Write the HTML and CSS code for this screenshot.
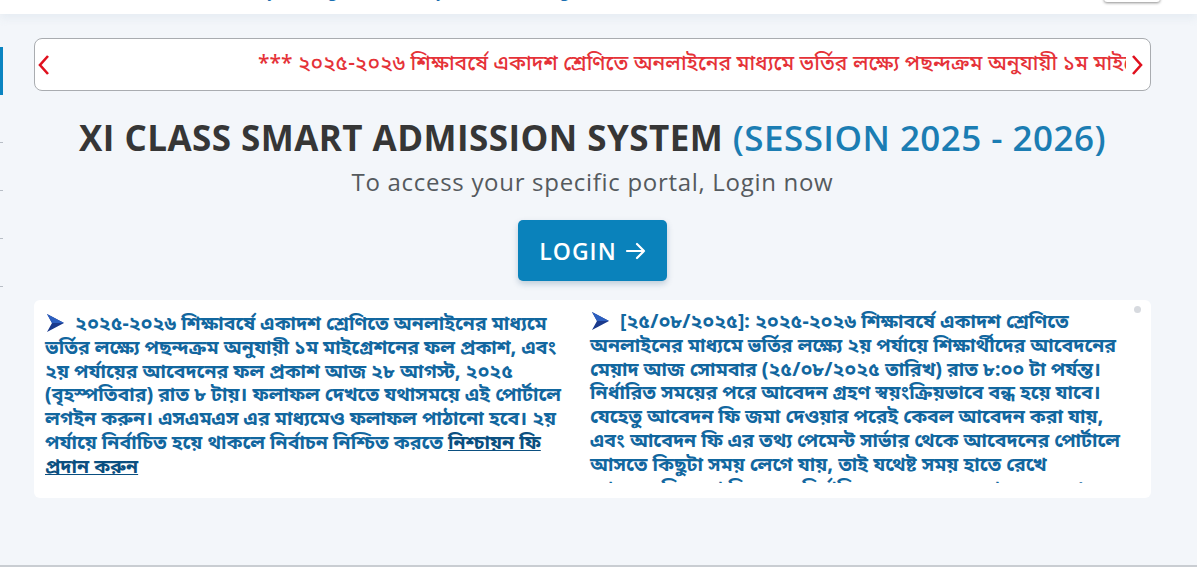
FILE: index.html
```html
<!DOCTYPE html>
<html lang="bn">
<head>
<meta charset="utf-8">
<title>XI Class Smart Admission System</title>
<link rel="stylesheet" href="styles.css">
</head>
<body>
<header class="topbar">
  <div class="topbar-text">Directorate of Secondary and Higher Secondary Education, Bangladesh — Inter Education Board</div>
  <div class="topbar-btn"></div>
</header>
<div class="page">
  <aside class="sidebar">
    <div class="side-active"></div>
    <div class="side-item"></div>
    <div class="side-item"></div>
    <div class="side-item"></div>
    <div class="side-item"></div>
  </aside>
  <main class="main">
    <div class="marquee">
      <span class="chev">
        <svg width="14" height="24" viewBox="0 0 14 24"><path d="M11 3 L3 12 L11 21" fill="none" stroke="#e0101e" stroke-width="2.6"/></svg>
      </span>
      <div class="marquee-track">
        <span class="marquee-text">*** ২০২৫-২০২৬ শিক্ষাবর্ষে একাদশ শ্রেণিতে অনলাইনের মাধ্যমে ভর্তির লক্ষ্যে পছন্দক্রম অনুযায়ী ১ম মাইগ্রেশনের ফল প্রকাশ, এবং ২য় পর্যায়ের আবেদনের ফল প্রকাশ আজ ২৮ আগস্ট, ২০২৫</span>
      </div>
      <span class="chev">
        <svg width="14" height="24" viewBox="0 0 14 24"><path d="M3 3 L11 12 L3 21" fill="none" stroke="#e0101e" stroke-width="2.6"/></svg>
      </span>
    </div>

    <section class="hero">
      <h1 class="title">XI CLASS SMART ADMISSION SYSTEM <span class="session">(SESSION 2025 - 2026)</span></h1>
      <p class="subtitle">To access your specific portal, Login now</p>
      <a class="login-btn" href="#">LOGIN
        <svg width="22" height="20" viewBox="0 0 22 20"><path d="M2 10 H19 M12 3 L19 10 L12 17" fill="none" stroke="#fff" stroke-width="2.2" stroke-linecap="round" stroke-linejoin="round"/></svg>
      </a>
    </section>

    <section class="notices">
      <div class="notice">
        <p><svg class="bullet" width="20" height="20" viewBox="0 0 20 20"><path d="M2 1 L19 10 L2 19 L7 10 Z" fill="#1a3a8c"/><path d="M2 1 L19 10 L7 10 Z" fill="#2c5fc0"/></svg>২০২৫-২০২৬ শিক্ষাবর্ষে একাদশ শ্রেণিতে অনলাইনের মাধ্যমে ভর্তির লক্ষ্যে পছন্দক্রম অনুযায়ী ১ম মাইগ্রেশনের ফল প্রকাশ, এবং ২য় পর্যায়ের আবেদনের ফল প্রকাশ আজ ২৮ আগস্ট, ২০২৫ (বৃহস্পতিবার) রাত ৮ টায়। ফলাফল দেখতে যথাসময়ে এই পোর্টালে লগইন করুন। এসএমএস এর মাধ্যমেও ফলাফল পাঠানো হবে। ২য় পর্যায়ে নির্বাচিত হয়ে থাকলে নির্বাচন নিশ্চিত করতে <a href="#" class="notice-link">নিশ্চায়ন ফি প্রদান করুন</a></p>
      </div>
      <div class="notice notice-scroll">
        <p><svg class="bullet" width="20" height="20" viewBox="0 0 20 20"><path d="M2 1 L19 10 L2 19 L7 10 Z" fill="#1a3a8c"/><path d="M2 1 L19 10 L7 10 Z" fill="#2c5fc0"/></svg>[২৫/০৮/২০২৫]: ২০২৫-২০২৬ শিক্ষাবর্ষে একাদশ শ্রেণিতে অনলাইনের মাধ্যমে ভর্তির লক্ষ্যে ২য় পর্যায়ে শিক্ষার্থীদের আবেদনের মেয়াদ আজ সোমবার (২৫/০৮/২০২৫ তারিখ) রাত ৮:০০ টা পর্যন্ত। নির্ধারিত সময়ের পরে আবেদন গ্রহণ স্বয়ংক্রিয়ভাবে বন্ধ হয়ে যাবে। যেহেতু আবেদন ফি জমা দেওয়ার পরেই কেবল আবেদন করা যায়, এবং আবেদন ফি এর তথ্য পেমেন্ট সার্ভার থেকে আবেদনের পোর্টালে আসতে কিছুটা সময় লেগে যায়, তাই যথেষ্ট সময় হাতে রেখে<br>আবেদন ফি জমা দিন এবং নির্ধারিত সময়ের মধ্যে আবেদন সম্পন্ন করুন।</p>
        <span class="scroll-dot"></span>
      </div>
    </section>
  </main>
</div>
</body>
</html>
```

FILE: styles.css
```css
html, body {
  margin: 0;
  padding: 0;
}
body {
  background: #f3f6fa;
  font-family: "Open Sans", "Noto Sans Bengali", "Lohit Bengali", "Noto Sans", sans-serif;
  height: 567px;
  overflow: hidden;
  position: relative;
  border-bottom: 2px solid #c9cdd2;
  box-sizing: border-box;
}
.topbar {
  height: 14px;
  background: #fff;
  overflow: hidden;
  position: relative;
  box-shadow: 0 4px 8px rgba(220, 228, 236, 0.6);
}
.topbar-text {
  margin-top: -18px;
  margin-left: 90px;
  font-size: 16px;
  line-height: 18px;
  color: #1a6fb0;
  white-space: nowrap;
}
.topbar-btn {
  position: absolute;
  right: 37px;
  top: -20px;
  width: 56px;
  height: 22px;
  border-radius: 3px;
  background: #fff;
  box-shadow: 0 1px 3px rgba(0,0,0,0.45);
}
.page {
  display: flex;
  padding-top: 24px;
}
.sidebar {
  width: 3px;
  flex: none;
  padding-top: 9px;
}
.side-active {
  height: 48px;
  background: #0a84c1;
}
.side-item {
  height: 48px;
  border-bottom: 1px solid #b8bec6;
  box-sizing: border-box;
}
.main {
  width: 1117px;
  margin-left: 31px;
}
.marquee {
  display: flex;
  align-items: center;
  height: 53px;
  box-sizing: border-box;
  border: 1px solid #a9acb0;
  border-radius: 8px;
  background: #fff;
  padding: 0 6px 0 2px;
}
.chev {
  flex: none;
  display: flex;
  align-items: center;
}
.marquee-track {
  flex: 1;
  overflow: hidden;
  white-space: nowrap;
  padding-left: 207px;
  margin-right: 4px;
}
.marquee-text {
  font-family: "Noto Sans Bengali", "Lohit Bengali", "Noto Sans", sans-serif;
  font-size: 21px;
  font-weight: 500;
  color: #e53238;
}
.hero {
  text-align: center;
  padding-top: 24px;
}
.title {
  margin: 0;
  font-family: "Open Sans", sans-serif;
  font-size: 35px;
  font-weight: 700;
  color: #363636;
  letter-spacing: 0.45px;
  line-height: 46px;
}
.session {
  color: #1b7db3;
  font-weight: 600;
}
.subtitle {
  margin: 6px 0 0;
  font-size: 24px;
  letter-spacing: 0.7px;
  color: #555a5e;
  line-height: 30px;
}
.login-btn {
  display: inline-flex;
  align-items: center;
  gap: 8px;
  margin-top: 23px;
  height: 61px;
  padding: 0 20px 0 21px;
  box-sizing: border-box;
  background: #0a82bb;
  color: #fff;
  text-decoration: none;
  font-size: 23px;
  font-weight: 600;
  letter-spacing: 1px;
  border-radius: 5px;
  box-shadow: 0 3px 6px rgba(0, 60, 100, 0.22);
}
.notices {
  margin-top: 19px;
  background: #fff;
  border-radius: 6px;
  height: 198px;
  display: grid;
  grid-template-columns: 547px 1fr;
  align-items: start;
  overflow: hidden;
}
.notice {
  padding: 13px 17px 0 11px;
  position: relative;
}
.notice-scroll {
  padding-left: 9px;
  padding-right: 27px;
  padding-top: 11px;
  height: 172px;
  overflow: hidden;
}
.notice p {
  margin: 0;
  font-family: "Noto Sans Bengali", "Lohit Bengali", "Noto Sans", sans-serif;
  font-size: 19.5px;
  font-weight: 700;
  line-height: 23.8px;
  color: #12679f;
}
.bullet {
  vertical-align: -3px;
  margin-right: 10px;
}
.notice-link {
  color: #0b4f80;
  text-decoration: underline;
}
.scroll-dot {
  position: absolute;
  top: 6px;
  right: 10px;
  width: 7px;
  height: 7px;
  border-radius: 50%;
  background: #d7dadf;
}
```
